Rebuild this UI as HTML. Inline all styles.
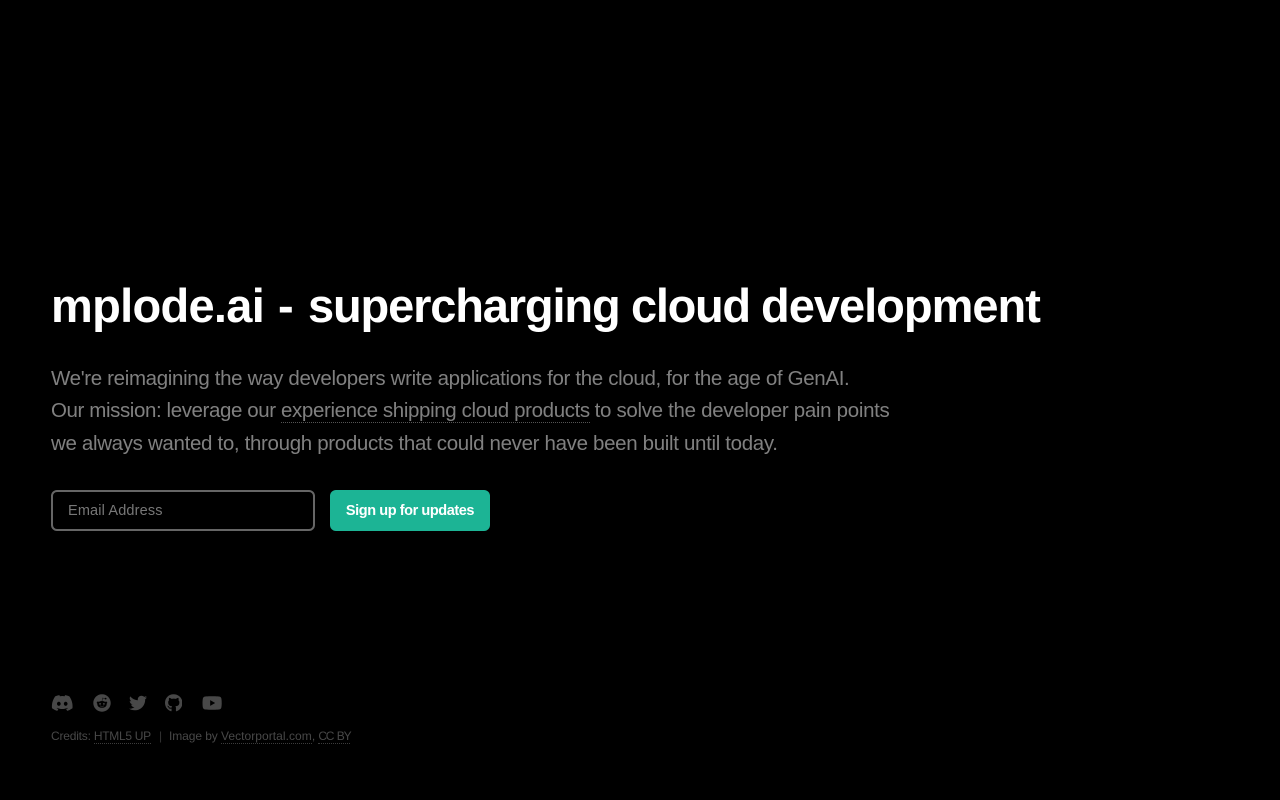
<!DOCTYPE html>
<html lang="en">
<head>
<meta charset="utf-8">
<title>mplode.ai</title>
<style>
html,body{margin:0;padding:0;background:#000;width:1280px;height:800px;overflow:hidden}
body{font-family:"Liberation Sans",Arial,sans-serif;position:relative}
.a{position:absolute;white-space:nowrap;margin:0}
h1.a{left:0;top:277px;width:1280px;height:58px;font-size:47px;line-height:58px;font-weight:700;color:#fff}
h1 span{position:absolute;top:0}
.l{left:51px;font-size:20.5px;line-height:32px;color:#808080;letter-spacing:-.34px}
.l a,.f a{color:inherit;text-decoration:none;border-bottom:1px dotted #555}
.inp{left:51px;top:490px;width:264px;height:41px;box-sizing:border-box;border:2px solid #666;border-radius:6px;background:#000;color:#777;font-size:14.5px;line-height:39px;padding-left:15px;letter-spacing:.15px}
.btn{left:330px;top:490px;width:160px;height:41px;border-radius:6px;background:#1cb495;color:#fff;font-size:14.5px;font-weight:700;line-height:43px;text-align:center;letter-spacing:-.42px}
.f{top:728px;font-size:12px;line-height:16px;color:#484848}
.f a{border-bottom-color:#3c3c3c}
svg{position:absolute;fill:#484848}
</style>
</head>
<body>
<h1 class="a"><span style="left:51px;letter-spacing:-.7px">mplode.ai</span> <span style="left:278px">-</span> <span style="left:308px;letter-spacing:-1.15px">supercharging</span> <span style="left:631px;letter-spacing:-1.3px">cloud</span> <span style="left:761px;letter-spacing:-1px">development</span></h1>
<p class="a l" style="top:363px">We're reimagining the way developers write applications for the cloud, for the age of GenAI.</p>
<p class="a l" style="top:394.5px;letter-spacing:-.4px">Our mission: leverage our <a href="#" style="letter-spacing:-.37px">experience shipping cloud products</a><span style="letter-spacing:-.31px;margin-left:-.6px"> to solve the developer pain points</span></p>
<p class="a l" style="top:428px;letter-spacing:-.33px">we always wanted to, through products that could never have been built until today.</p>
<div class="a inp">Email Address</div>
<div class="a btn">Sign up for updates</div>

<svg style="left:51px;top:694px" width="22.5" height="18" viewBox="0 0 640 512"><path d="M524.531,69.836a1.5,1.5,0,0,0-.764-.7A485.065,485.065,0,0,0,404.081,32.03a1.816,1.816,0,0,0-1.923.91,337.461,337.461,0,0,0-14.9,30.6,447.848,447.848,0,0,0-134.426,0,309.541,309.541,0,0,0-15.135-30.6,1.89,1.89,0,0,0-1.924-.91A483.689,483.689,0,0,0,116.085,69.137a1.712,1.712,0,0,0-.788.676C39.068,183.651,18.186,294.69,28.43,404.354a2.016,2.016,0,0,0,.765,1.375A487.666,487.666,0,0,0,176.02,479.918a1.9,1.9,0,0,0,2.063-.676A348.2,348.2,0,0,0,208.12,430.4a1.86,1.86,0,0,0-1.019-2.588,321.173,321.173,0,0,1-45.868-21.853,1.885,1.885,0,0,1-.185-3.126c3.082-2.309,6.166-4.711,9.109-7.137a1.819,1.819,0,0,1,1.9-.256c96.229,43.917,200.41,43.917,295.5,0a1.812,1.812,0,0,1,1.924.233c2.944,2.426,6.027,4.851,9.132,7.16a1.884,1.884,0,0,1-.162,3.126,301.407,301.407,0,0,1-45.89,21.83,1.875,1.875,0,0,0-1,2.611,391.055,391.055,0,0,0,30.014,48.815,1.864,1.864,0,0,0,2.063.7A486.048,486.048,0,0,0,610.7,405.729a1.882,1.882,0,0,0,.765-1.352C623.729,277.594,590.933,167.465,524.531,69.836ZM222.491,337.58c-28.972,0-52.844-26.587-52.844-59.239S193.056,219.1,222.491,219.1c29.665,0,53.306,26.82,52.843,59.239C275.334,310.993,251.924,337.58,222.491,337.58Zm195.38,0c-28.971,0-52.843-26.587-52.843-59.239S388.437,219.1,417.871,219.1c29.667,0,53.307,26.82,52.844,59.239C470.715,310.993,447.538,337.58,417.871,337.58Z"/></svg>
<svg style="left:93px;top:694px" width="18" height="18" viewBox="0 0 512 512"><path d="M201.5 305.5c-13.8 0-24.9-11.1-24.9-24.6 0-13.8 11.1-24.9 24.9-24.9 13.6 0 24.6 11.1 24.6 24.9 0 13.6-11.1 24.6-24.6 24.6zM504 256c0 137-111 248-248 248S8 393 8 256 119 8 256 8s248 111 248 248zm-132.3-41.2c-9.4 0-17.7 3.9-23.8 10-22.4-15.5-52.6-25.5-86.1-26.6l17.4-78.3 55.4 12.5c0 13.6 11.1 24.6 24.6 24.6 13.8 0 24.9-11.3 24.9-24.9s-11.1-24.9-24.9-24.9c-9.7 0-18 5.8-22.1 13.8l-61.2-13.6c-3-.8-6.1 1.4-6.9 4.4l-19.1 86.4c-33.2 1.4-63.1 11.3-85.5 26.8-6.1-6.4-14.7-10.2-24.1-10.2-34.9 0-46.3 46.9-14.4 62.8-1.4 6.1-1.9 12.7-1.9 19.3 0 52.6 59.2 95.2 132 95.2 73.1 0 132.3-42.6 132.3-95.2 0-6.6-.8-13.5-2.2-19.6 31.3-16 19.8-62.5-14.9-62.5zM302.8 331c-18.2 18.2-76.1 17.9-93.6 0-2.2-2.2-6.1-2.2-8.3 0-2.5 2.5-2.5 6.4 0 8.6 22.8 22.8 87.3 22.8 110.2 0 2.5-2.2 2.5-6.1 0-8.6-2.2-2.2-6.1-2.2-8.3 0zm7.7-75c-13.6 0-24.6 11.1-24.6 24.9 0 13.6 11.1 24.6 24.6 24.6 13.8 0 24.9-11.1 24.9-24.6 0-13.8-11-24.9-24.9-24.9z"/></svg>
<svg style="left:129px;top:694px" width="18" height="18" viewBox="0 0 512 512"><path d="M459.37 151.716c.325 4.548.325 9.097.325 13.645 0 138.72-105.583 298.558-298.558 298.558-59.452 0-114.68-17.219-161.137-47.106 8.447.974 16.568 1.299 25.34 1.299 49.055 0 94.213-16.568 130.274-44.832-46.132-.975-84.792-31.188-98.112-72.772 6.498.974 12.995 1.624 19.818 1.624 9.421 0 18.843-1.3 27.614-3.573-48.081-9.747-84.143-51.98-84.143-102.985v-1.299c13.969 7.797 30.214 12.67 47.431 13.319-28.264-18.843-46.781-51.005-46.781-87.391 0-19.492 5.197-37.36 14.294-52.954 51.655 63.675 129.3 105.258 216.365 109.807-1.624-7.797-2.599-15.918-2.599-24.04 0-57.828 46.782-104.934 104.934-104.934 30.213 0 57.502 12.67 76.67 33.137 23.715-4.548 46.456-13.32 66.599-25.34-7.798 24.366-24.366 44.833-46.132 57.827 21.117-2.273 41.584-8.122 60.426-16.243-14.292 20.791-32.161 39.308-52.628 54.253z"/></svg>
<svg style="left:165px;top:694px" width="17.44" height="18" viewBox="0 0 496 512"><path d="M165.9 397.4c0 2-2.3 3.6-5.2 3.6-3.3 0-5.6-1.6-5.6-3.6 0-2 2.3-3.6 5.2-3.6 3-.3 5.6 1.3 5.6 3.6zm-31.1-4.5c-.7 2 1.3 4.3 4.3 4.9 2.6 1 5.6 0 6.2-2s-1.3-4.3-4.3-5c-2.6-.7-5.5.3-6.2 2.1zm44.2-1.7c-2.9.7-4.9 2.6-4.6 4.9.3 2 2.9 3.3 5.9 2.6 2.9-.7 4.9-2.6 4.6-4.6-.3-1.9-3-3.2-5.9-2.9zM244.8 8C106.1 8 0 113.3 0 252c0 110.9 69.8 205.8 169.5 239.2 12.8 2.3 17.3-5.6 17.3-12.1 0-6.2-.3-40.4-.3-61.4 0 0-70 15-84.7-29.8 0 0-11.4-29.1-27.8-36.6 0 0-22.9-15.7 1.6-15.4 0 0 24.9 2 38.6 25.8 21.9 38.6 58.6 27.5 72.9 20.9 2.3-16 8.8-27.1 16-33.7-55.9-6.2-112.3-14.3-112.3-110.5 0-27.5 7.6-41.3 23.6-58.9-2.6-6.5-11.1-33.3 2.6-67.9 20.9-6.5 69 27 69 27 20-5.6 41.5-8.5 62.8-8.5s42.8 2.9 62.8 8.5c0 0 48.1-33.6 69-27 13.7 34.7 5.2 61.4 2.6 67.9 16 17.7 25.8 31.5 25.8 58.9 0 96.5-58.9 104.2-114.8 110.5 9.2 7.9 17 22.9 17 46.4 0 33.7-.3 75.4-.3 83.6 0 6.5 4.6 14.4 17.3 12.1C428.2 457.8 496 362.9 496 252 496 113.3 383.5 8 244.8 8z"/></svg>
<svg style="left:201.6px;top:694px" width="20.25" height="18" viewBox="0 0 576 512"><path d="M549.655 124.083c-6.281-23.65-24.787-42.276-48.284-48.597C458.781 64 288 64 288 64S117.22 64 74.629 75.486c-23.497 6.322-42.003 24.947-48.284 48.597-11.412 42.867-11.412 132.305-11.412 132.305s0 89.438 11.412 132.305c6.281 23.65 24.787 41.5 48.284 47.821C117.22 448 288 448 288 448s170.78 0 213.371-11.486c23.497-6.321 42.003-24.171 48.284-47.821 11.412-42.867 11.412-132.305 11.412-132.305s0-89.438-11.412-132.305zm-317.51 213.508V175.185l142.739 81.205-142.739 81.201z"/></svg>

<div class="a f" style="left:51px;letter-spacing:-.2px">Credits: <a href="#" style="letter-spacing:-.3px">HTML5 UP</a></div>
<div class="a f" style="left:159px;color:#333">|</div>
<div class="a f" style="left:169px;letter-spacing:-.08px">Image by <a href="#" style="letter-spacing:.05px">Vectorportal.com</a>, <a href="#" style="letter-spacing:-1.2px;word-spacing:1.4px">CC BY</a></div>
</body>
</html>
